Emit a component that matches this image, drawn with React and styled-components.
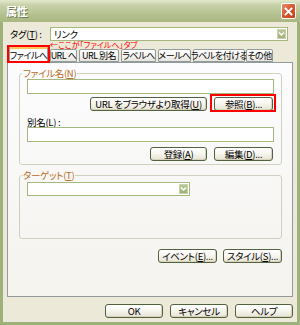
import React from "react";
import styled, { createGlobalStyle, css } from "styled-components";

const GlobalStyle = createGlobalStyle`
  html, body { margin: 0; padding: 0; background: #ffffff; }
  body { width: 300px; height: 325px; overflow: hidden; }
`;

const FONT = `"Noto Sans CJK JP", "Noto Sans CJK SC", sans-serif`;

const Window = styled.div`
  width: 300px;
  height: 325px;
  display: flex;
  flex-direction: column;
  font-family: ${FONT};
  font-size: 9.5px;
  line-height: 10px;
  font-feature-settings: "palt" 1;
  font-variant-east-asian: proportional-width;
  letter-spacing: -0.3px;
  color: #000;
`;

const TitleBar = styled.div`
  height: 22px;
  flex: none;
  display: flex;
  align-items: center;
  justify-content: space-between;
  padding: 0 4px 0 6px;
  background: linear-gradient(180deg, #e2e8cb 0%, #c6d0a6 25%, #b5c290 65%, #a9b782 100%);
`;

const Title = styled.span`
  color: #fff;
  font-weight: bold;
  font-size: 11px;
  line-height: 11px;
  text-shadow: 1px 1px 0 #6f7d55;
`;

const CloseButton = styled.div`
  width: 15px;
  height: 16px;
  box-sizing: border-box;
  border: 1px solid #fff;
  border-radius: 2px;
  background: linear-gradient(135deg, #ec8c6e 0%, #d9562f 50%, #c2401f 100%);
  display: flex;
  align-items: center;
  justify-content: center;
`;

const Frame = styled.div`
  flex: 1;
  display: flex;
  flex-direction: column;
  background: #ece9d8;
  border: 3px solid #9db17b;
  border-top: 0;
  padding: 4px;
`;

const TagRow = styled.div`
  height: 16px;
  flex: none;
  display: flex;
  align-items: center;
  padding: 0 5px 0 3px;
`;

const FieldLabel = styled.span`
  width: ${(p) => p.$w || "auto"};
  flex: none;
  white-space: nowrap;
`;

const Combo = styled.div`
  width: ${(p) => (p.$w ? `${p.$w}px` : "auto")};
  flex: ${(p) => (p.$w ? "none" : "1")};
  height: ${(p) => p.$h}px;
  box-sizing: border-box;
  border: 1px solid #a5b97f;
  background: #fff;
  display: flex;
  align-items: center;
  justify-content: space-between;
`;

const ComboText = styled.span`
  padding-left: 3px;
`;

const ComboArrow = styled.div`
  width: 9px;
  align-self: stretch;
  margin: 1px;
  box-sizing: border-box;
  border: 1px solid #c8d2ae;
  background: linear-gradient(180deg, #b9c697 0%, #a2b27b 100%);
  display: flex;
  align-items: center;
  justify-content: center;
`;

/* red annotation frame drawn over a control */
const marker = (l, r, t, b) => css`
  position: relative;
  &::after {
    content: "";
    position: absolute;
    left: ${l}px;
    right: ${r}px;
    top: ${t}px;
    bottom: ${b}px;
    border: 2px solid #ff0000;
    pointer-events: none;
  }
`;

const TabStrip = styled.div`
  height: 20px;
  flex: none;
  display: flex;
  align-items: flex-end;
  position: relative;
  padding-left: 1px;
  z-index: 1;
`;

const Tab = styled.div`
  width: ${(p) => p.$w}px;
  height: ${(p) => (p.$active ? 17 : 13)}px;
  margin-left: ${(p) => p.$gap}px;
  margin-bottom: ${(p) => (p.$active ? -1 : 0)}px;
  box-sizing: border-box;
  border: 1px solid #919b9c;
  border-bottom: ${(p) => (p.$active ? "0" : "1px solid #919b9c")};
  border-top-color: ${(p) => (p.$active ? "#e68b2c" : "#919b9c")};
  border-radius: 2px 2px 0 0;
  background: ${(p) =>
    p.$active ? "#fcfcfe" : "linear-gradient(180deg, #ffffff 0%, #f3f2ee 60%, #e6e4dc 100%)"};
  box-shadow: ${(p) => (p.$active ? "inset 0 2px 0 #fbc656" : "none")};
  display: flex;
  align-items: center;
  justify-content: center;
  white-space: nowrap;
  font-size: 9px;
  letter-spacing: -0.5px;
  padding-top: ${(p) => (p.$active ? 1 : 0)}px;
  ${(p) => p.$marked && marker(-3, -3, -2, 0)}
`;

const Annotation = styled.span`
  position: absolute;
  left: 43px;
  top: -1px;
  color: #ff0000;
  font-size: 8px;
  line-height: 8px;
  letter-spacing: 0;
  white-space: nowrap;
`;

const Panel = styled.div`
  height: 235px;
  flex: none;
  box-sizing: border-box;
  border: 1px solid #919b9c;
  background: linear-gradient(180deg, #fcfcfe 0%, #f4f3ee 100%);
  padding: 5px 10px 0 11px;
  display: flex;
  flex-direction: column;
`;

const Group = styled.fieldset`
  margin: ${(p) => p.$mt || 0}px 0 0 0;
  border: 1px solid #d0d0bf;
  border-radius: 3px;
  padding: 0;
  min-width: 0;
`;

const Legend = styled.legend`
  padding: 0 1px;
  margin-left: 2px;
  color: #b96b23;
  font-size: 9.5px;
  line-height: 10px;
`;

const GroupBody = styled.div`
  display: flex;
  flex-direction: column;
  padding: ${(p) => p.$pt}px 7px ${(p) => p.$pb}px 7px;
`;

const TextBox = styled.div`
  height: 15px;
  box-sizing: border-box;
  border: 1px solid #a5b97f;
  background: #fff;
`;

const Label = styled.div`
  margin-top: ${(p) => p.$mt || 0}px;
  height: 10px;
`;

const ButtonRow = styled.div`
  display: flex;
  justify-content: flex-end;
  gap: ${(p) => p.$gap ?? 7}px;
  margin-top: ${(p) => p.$mt || 0}px;
  padding-right: ${(p) => p.$pr || 0}px;
  flex: none;
`;

const Button = styled.div`
  width: ${(p) => p.$w}px;
  height: 14px;
  box-sizing: border-box;
  border: 1px solid #52623f;
  border-radius: 3px;
  background: linear-gradient(180deg, #ffffff 0%, #f7f6f0 45%, #e6e3d3 100%);
  box-shadow: inset -1px -1px 0 #d9d3bb;
  display: flex;
  align-items: center;
  justify-content: center;
  white-space: nowrap;
  ${(p) => p.$marked && marker(-5, -4, -4, -2)}
`;

const U = styled.span`
  text-decoration: underline;
`;

const Chevron = () => (
  <svg width="7" height="6" viewBox="0 0 7 6">
    <polyline points="1,1.5 3.5,4 6,1.5" fill="none" stroke="#ffffff" strokeWidth="1.4" />
  </svg>
);

const CloseX = () => (
  <svg width="9" height="9" viewBox="0 0 9 9">
    <path d="M1.5 1.5 L7.5 7.5 M7.5 1.5 L1.5 7.5" stroke="#ffffff" strokeWidth="1.8" strokeLinecap="square" />
  </svg>
);

const tabs = [
  { label: "ファイルへ", w: 39, gap: 1, active: true, marked: true },
  { label: "URL へ", w: 27, gap: 2 },
  { label: "URL 別名", w: 40, gap: 2 },
  { label: "ラベルへ", w: 35, gap: 2 },
  { label: "メールへ", w: 33, gap: 2 },
  { label: "ラベルを付ける", w: 52, gap: 2 },
  { label: "その他", w: 27, gap: 1 },
];

export default function App() {
  return (
    <>
      <GlobalStyle />
      <Window>
        <TitleBar>
          <Title>属性</Title>
          <CloseButton>
            <CloseX />
          </CloseButton>
        </TitleBar>
        <Frame>
          <TagRow>
            <FieldLabel $w="40px">
              タグ(<U>T</U>) :
            </FieldLabel>
            <Combo $h={14}>
              <ComboText>リンク</ComboText>
              <ComboArrow>
                <Chevron />
              </ComboArrow>
            </Combo>
          </TagRow>
          <TabStrip>
            <Annotation>←ここが「ファイルへ」タブ</Annotation>
            {tabs.map((t) => (
              <Tab key={t.label} $w={t.w} $gap={t.gap} $active={t.active} $marked={t.marked}>
                {t.label}
              </Tab>
            ))}
          </TabStrip>
          <Panel>
            <Group>
              <Legend>
                ファイル名(<U>N</U>)
              </Legend>
              <GroupBody $pt={1} $pb={3}>
                <TextBox />
                <ButtonRow $mt={3} $pr={1}>
                  <Button $w={117}>
                    URL をブラウザより取得(<U>U</U>)
                  </Button>
                  <Button $w={59} $marked>
                    参照(<U>B</U>)...
                  </Button>
                </ButtonRow>
                <Label $mt={6}>
                  別名(<U>L</U>) :
                </Label>
                <TextBox />
                <ButtonRow $mt={5} $pr={1}>
                  <Button $w={57}>
                    登録(<U>A</U>)
                  </Button>
                  <Button $w={59}>
                    編集(<U>D</U>)...
                  </Button>
                </ButtonRow>
              </GroupBody>
            </Group>
            <Group $mt={5}>
              <Legend>
                ターゲット(<U>T</U>)
              </Legend>
              <GroupBody $pt={2} $pb={42}>
                <Combo $h={14} $w={163}>
                  <ComboText />
                  <ComboArrow>
                    <Chevron />
                  </ComboArrow>
                </Combo>
              </GroupBody>
            </Group>
            <ButtonRow $mt={10} $gap={6}>
              <Button $w={59}>
                イベント(<U>E</U>)...
              </Button>
              <Button $w={59}>
                スタイル(<U>S</U>)...
              </Button>
            </ButtonRow>
          </Panel>
          <ButtonRow $mt={7}>
            <Button $w={58}>OK</Button>
            <Button $w={58}>キャンセル</Button>
            <Button $w={58}>ヘルプ</Button>
          </ButtonRow>
        </Frame>
      </Window>
    </>
  );
}
